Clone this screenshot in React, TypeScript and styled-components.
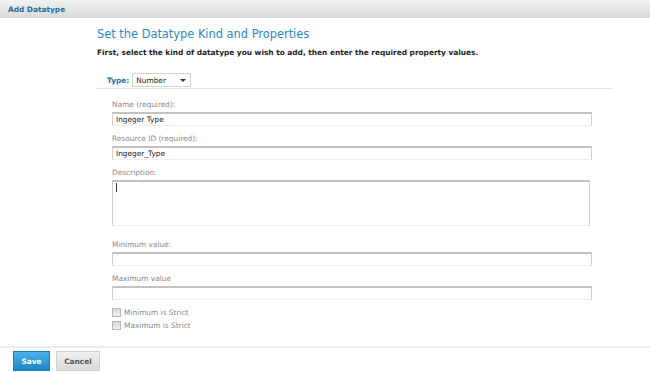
import styled, { createGlobalStyle } from "styled-components";

const GlobalStyle = createGlobalStyle`
  html, body {
    margin: 0;
    padding: 0;
    background: #fff;
  }
  body {
    font-family: "DejaVu Sans", Verdana, sans-serif;
    font-size: 7.4px;
    color: #333;
  }
`;

const Page = styled.div`
  width: 650px;
  height: 372px;
  display: flex;
  flex-direction: column;
  overflow: hidden;
`;

const TitleBar = styled.div`
  height: 18px;
  flex-shrink: 0;
  display: flex;
  align-items: center;
  padding-left: 8px;
  background: linear-gradient(#f2f2f2, #d9d9d9);
  color: #1f6ea6;
  font-weight: bold;
`;

const Body = styled.div`
  flex: 1;
  padding: 9px 38px 0 97px;
  display: flex;
  flex-direction: column;
`;

const Heading = styled.h1`
  margin: 0;
  font-weight: normal;
  font-size: 11.4px;
  color: #2b8ac6;
  line-height: 14px;
`;

const Intro = styled.p`
  margin: 7px 0 0;
  line-height: 10px;
  font-weight: bold;
  color: #222;
`;

const TypeRow = styled.div`
  margin-top: 15px;
  padding: 0 0 1px 10px;
  display: flex;
  align-items: center;
  gap: 3px;
  border-bottom: 1px solid #e2e2e2;
`;

const TypeLabel = styled.span`
  color: #1f6ea6;
  font-weight: bold;
`;

const Select = styled.div`
  width: 59px;
  height: 14px;
  border: 1px solid #d4d4d4;
  display: flex;
  align-items: center;
  justify-content: space-between;
  padding: 0 4px 0 3px;
  box-sizing: border-box;
  color: #222;
  &::after {
    content: "";
    border-left: 3px solid transparent;
    border-right: 3px solid transparent;
    border-top: 3px solid #333;
  }
`;

const Fields = styled.div`
  padding: 11px 0 0 15px;
  width: 480px;
  display: flex;
  flex-direction: column;
`;

const Label = styled.label`
  color: #888;
  line-height: 10px;
  margin-bottom: 2px;
`;

const Field = styled.div<{ $gap?: number }>`
  display: flex;
  flex-direction: column;
  margin-bottom: ${(p) => p.$gap ?? 8}px;
`;

const TextBox = styled.div<{ $tall?: boolean; $narrow?: boolean }>`
  height: ${(p) => (p.$tall ? 46 : 14)}px;
  width: ${(p) => (p.$narrow ? 478 : 480)}px;
  box-sizing: border-box;
  border: 1px solid #cfcfcf;
  border-top: 2px solid #c2c2c2;
  border-bottom-color: #eeeeee;
  padding: 0 3px;
  display: flex;
  align-items: ${(p) => (p.$tall ? "flex-start" : "center")};
  color: #222;
`;

const Caret = styled.span`
  width: 1px;
  height: 9px;
  background: #333;
  margin-top: 1px;
`;

const Checks = styled.div`
  display: flex;
  flex-direction: column;
  gap: 4px;
`;

const CheckRow = styled.label`
  display: flex;
  align-items: center;
  height: 9px;
  gap: 3px;
  color: #888;
`;

const Box = styled.span`
  width: 7px;
  height: 7px;
  border: 1px solid #b5b5b5;
  background: linear-gradient(#d8d8d8, #f0f0f0);
`;

const Footer = styled.div`
  height: 24px;
  flex-shrink: 0;
  border-top: 2px solid #eeeeee;
  display: flex;
  align-items: center;
  gap: 6px;
  padding-left: 13px;
`;

const Button = styled.button<{ $primary?: boolean }>`
  height: 20px;
  width: ${(p) => (p.$primary ? 37 : 44)}px;
  padding: 0;
  border: 1px solid ${(p) => (p.$primary ? "#1d7fc0" : "#d0d0d0")};
  background: ${(p) =>
    p.$primary
      ? "linear-gradient(#4cb1ea, #1f85c8)"
      : "linear-gradient(#f0f0f0, #d9d9d9)"};
  color: ${(p) => (p.$primary ? "#fff" : "#555")};
  font-family: inherit;
  font-size: 7.4px;
  font-weight: bold;
  margin-top: 2px;
`;

export default function App() {
  return (
    <Page>
      <GlobalStyle />
      <TitleBar>Add Datatype</TitleBar>
      <Body>
        <Heading>Set the Datatype Kind and Properties</Heading>
        <Intro>
          First, select the kind of datatype you wish to add, then enter the
          required property values.
        </Intro>
        <TypeRow>
          <TypeLabel>Type:</TypeLabel>
          <Select>Number</Select>
        </TypeRow>
        <Fields>
          <Field>
            <Label>Name (required):</Label>
            <TextBox>Ingeger Type</TextBox>
          </Field>
          <Field>
            <Label>Resource ID (required):</Label>
            <TextBox>Ingeger_Type</TextBox>
          </Field>
          <Field $gap={14}>
            <Label>Description:</Label>
            <TextBox $tall $narrow>
              <Caret />
            </TextBox>
          </Field>
          <Field>
            <Label>Minimum value:</Label>
            <TextBox />
          </Field>
          <Field>
            <Label>Maximum value</Label>
            <TextBox />
          </Field>
          <Checks>
            <CheckRow>
              <Box />
              Minimum is Strict
            </CheckRow>
            <CheckRow>
              <Box />
              Maximum is Strict
            </CheckRow>
          </Checks>
        </Fields>
      </Body>
      <Footer>
        <Button $primary>Save</Button>
        <Button>Cancel</Button>
      </Footer>
    </Page>
  );
}
